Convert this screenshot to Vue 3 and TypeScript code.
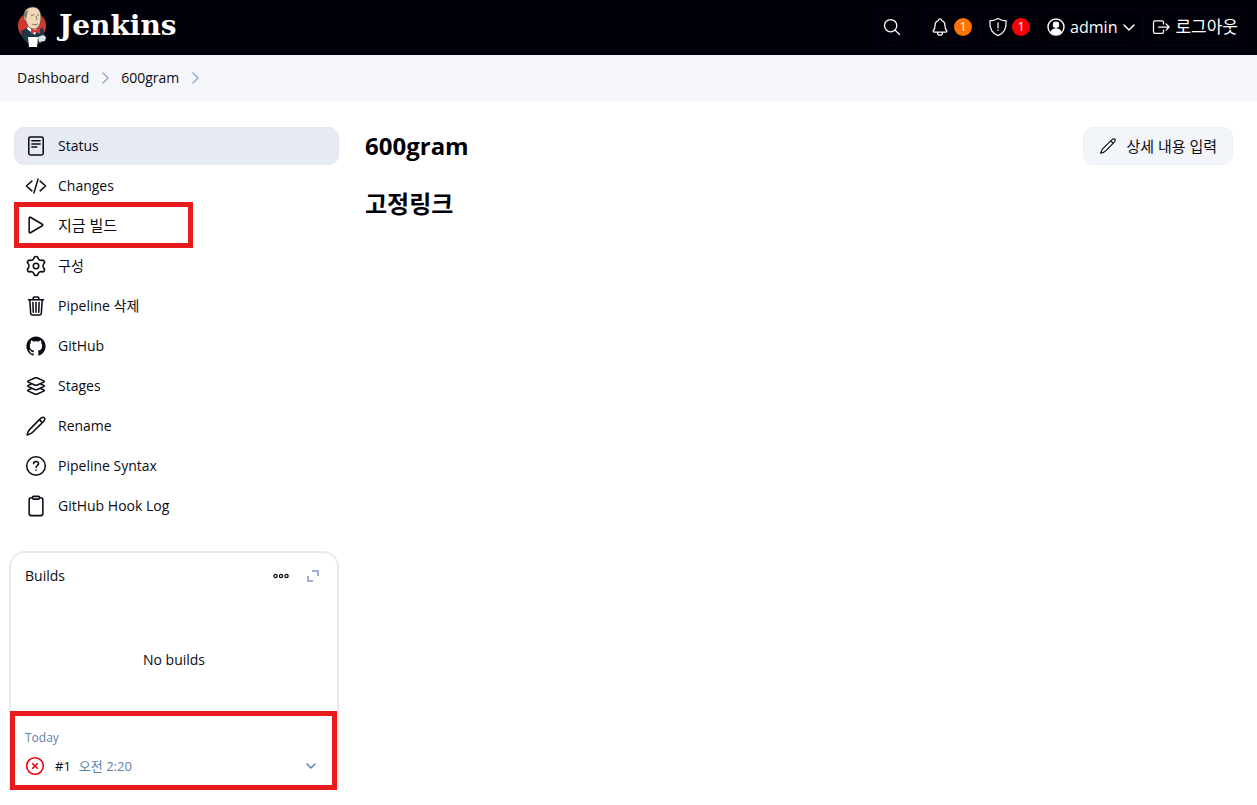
<script setup lang="ts">
interface Task {
  label: string
  icon: string
  active?: boolean
  marked?: boolean
  hangul?: boolean
}

const tasks: Task[] = [
  { label: 'Status', icon: 'status', active: true },
  { label: 'Changes', icon: 'code' },
  { label: '지금 빌드', icon: 'play', marked: true, hangul: true },
  { label: '구성', icon: 'gear' },
  { label: 'Pipeline 삭제', icon: 'trash' },
  { label: 'GitHub', icon: 'github' },
  { label: 'Stages', icon: 'layers' },
  { label: 'Rename', icon: 'pencil' },
  { label: 'Pipeline Syntax', icon: 'help' },
  { label: 'GitHub Hook Log', icon: 'clipboard' },
]

const crumbs: string[] = ['Dashboard', '600gram']

// Outlines on a 512-unit grid.
const paths: Record<string, string> = {
  status:
    'M128 48h256a40 40 0 0140 40v336a40 40 0 01-40 40H128a40 40 0 01-40-40V88a40 40 0 0140-40zM160 136h192M160 208h192M160 280h112',
  code: 'M160 368L32 256l128-112M352 368l128-112-128-112M304 96l-96 320',
  play: 'M96 96v320c0 17.44 17 28.52 31 20.16l276-163.37c12.12-7.25 12.12-26.33 0-33.58L127 75.84c-14-8.36-31 2.72-31 20.16z',
  gear:
    'M206 84C212 18 300 18 306 84Q331 126 380 127C440 99 484 175 430 213Q406 256 430 299C484 337 440 413 380 385Q331 386 306 428C300 494 212 494 206 428Q181 386 132 385C72 413 28 337 82 299Q106 256 82 213C28 175 72 99 132 127Q181 126 206 84zM256 192a64 64 0 100 128 64 64 0 000-128z',
  trash:
    'M112 112l20 320c.95 18.49 14.4 32 32 32h184c17.67 0 30.87-13.51 32-32l20-320M80 112h352M192 112V72a23.93 23.93 0 0124-24h80a23.93 23.93 0 0124 24v40M256 176v224M184 176l8 224M328 176l-8 224',
  layers:
    'M434.8 137.65l-149.36-68.1c-16.19-7.4-42.69-7.4-58.88 0L77.3 137.65c-17.6 8-17.6 21.09 0 29.09l148 67.5c16.89 7.7 44.69 7.7 61.58 0l148-67.5c17.52-8 17.52-21.1-.08-29.09zM160 308.52l-82.7 37.11c-17.6 8-17.6 21.1 0 29.1l148 67.5c16.89 7.69 44.69 7.69 61.58 0l148-67.5c17.6-8 17.6-21.1 0-29.1l-79.94-38.47M160 204.48l-82.8 37.16c-17.6 8-17.6 21.1 0 29.1l148 67.49c16.89 7.7 44.69 7.7 61.58 0l148-67.49c17.7-8 17.7-21.1.1-29.1L352 204.48',
  pencil:
    'M48 464C58 414 76 368 104 340L346 96C384 58 424 38 452 64S454 128 416 166L172 408C144 436 98 454 48 464zM334 108l70 70',
  help:
    'M256 40a216 216 0 100 432 216 216 0 000-432zM200 202c0-70 116-68 116-4 0 44-56 44-58 90M257 348v8',
  clipboard:
    'M336 64h32a48 48 0 0148 48v320a48 48 0 01-48 48H144a48 48 0 01-48-48V112a48 48 0 0148-48h32M202 32h108a26 26 0 010 64H202a26 26 0 010-64z',
}

const github =
  'M256 32C132.3 32 32 134.9 32 261.7c0 101.5 64.2 187.5 153.2 217.9a17.56 17.56 0 003.8.4c8.3 0 11.5-6.1 11.5-11.4 0-5.5-.2-19.9-.3-39.1a102.4 102.4 0 01-22.6 2.7c-43.1 0-52.9-33.5-52.9-33.5-10.2-26.5-24.9-33.6-24.9-33.6-19.5-13.7-.1-14.1 1.4-14.1h.1c22.5 2 34.3 23.8 34.3 23.8 11.2 19.6 26.2 25.1 39.6 25.1a63 63 0 0025.6-6c2-14.8 7.8-24.9 14.2-30.7-49.7-5.8-102-25.5-102-113.5 0-25.1 8.7-45.6 23-61.6-2.3-5.8-10-29.2 2.2-60.8a18.64 18.64 0 015-.5c8.1 0 26.4 3.1 56.6 24.1a208.21 208.21 0 01112.2 0c30.2-21 48.5-24.1 56.6-24.1a18.64 18.64 0 015 .5c12.2 31.6 4.5 55 2.2 60.8 14.3 16.1 23 36.6 23 61.6 0 88.2-52.4 107.6-102.3 113.3 8 7.1 15.2 21.1 15.2 42.5 0 30.7-.3 55.5-.3 63 0 5.4 3.1 11.5 11.4 11.5a19.35 19.35 0 004-.4C415.9 449.2 480 363.1 480 261.7 480 134.9 379.7 32 256 32z'
</script>

<template>
  <div class="page">
    <header class="header">
      <a class="brand" href="#">
        <svg class="butler" viewBox="0 0 34 42" aria-hidden="true">
          <ellipse cx="16" cy="20" rx="14" ry="14" fill="#d33833" />
          <path d="M5 25l7-4 8 3 7-2 2 8-2 3-1 4-6 2-9-2-5-6z" fill="#1f3647" />
          <path d="M12 20l-1 3 8 6 2-6z" fill="#fff" />
          <path d="M8 9C8 4 12 1 17 1s8 4 8 10c0 7-2 12-7 12-4 0-7-3-8-8-2-1-3-3-2-6z" fill="#f0d6b7" stroke="#49372d" stroke-width=".7" />
          <path d="M8 8c0 3 1 4 2 6l1-5 1-5c-2 1-4 2-4 4z" fill="#81786b" />
          <path d="M15 9h3m3 0h2m-3 1l1 4m-5 4c2 1 4 1 6 0" fill="none" stroke="#6d5547" stroke-width=".8" />
          <path d="M15 22l4 2 5-2v6l-5-2-4 2z" fill="#d33833" />
          <path d="M12 31h10l-1 10h-8z" fill="#fff" />
          <path d="M22 31l5-2 3 2-1 4-6 1z" fill="#dce3e8" />
        </svg>
        <span class="brand-name">Jenkins</span>
      </a>
      <div class="header-actions">
        <button class="hbtn search" type="button" aria-label="Search">
          <svg class="hicon line" viewBox="0 0 512 512"><circle cx="221" cy="221" r="157" /><path d="M338 338l110 110" /></svg>
        </button>
        <button class="hbtn notice" type="button" aria-label="Notifications">
          <svg class="hicon line" viewBox="0 0 512 512"><path d="M427.68 351.43C402 320 383.87 304 383.87 217.35 383.87 138 343.35 109.73 310 96c-4.43-1.82-8.6-6-9.95-10.55C294.2 65.54 277.8 48 256 48s-38.21 17.55-44 37.47c-1.35 4.6-5.52 8.71-9.95 10.53-33.39 13.75-73.87 41.92-73.87 121.35C128.13 304 110 320 84.32 351.43 73.68 364.45 83 384 101.61 384h308.88c18.51 0 27.77-19.61 17.19-32.57zM320 384v16a64 64 0 01-128 0v-16" /></svg>
          <span class="badge orange">1</span>
        </button>
        <button class="hbtn notice" type="button" aria-label="Security warnings">
          <svg class="hicon line" viewBox="0 0 512 512"><path d="M463 100C450 100 358 100 256 40 154 100 62 100 49 100c-14 200 53 320 207 376 154-56 221-176 207-376zM256 150v130M256 335v8" /></svg>
          <span class="badge red">1</span>
        </button>
        <a class="hbtn user" href="#">
          <svg class="hicon" viewBox="0 0 20 20"><circle cx="10" cy="10" r="8" fill="none" stroke="currentColor" stroke-width="1.4" /><circle cx="10" cy="7.8" r="3.2" fill="currentColor" /><path d="M4.5 15c1-5 10-5 11 0-3 4-8 4-11 0z" fill="currentColor" /></svg>
          <span>admin</span>
          <svg class="chev line" viewBox="0 0 12 12"><path d="M1 4l5 5 5-5" /></svg>
        </a>
        <a class="hbtn logout" href="#">
          <svg class="hicon line" viewBox="0 0 512 512"><path d="M320 176v-40a40 40 0 00-40-40H104a40 40 0 00-40 40v240a40 40 0 0040 40h176a40 40 0 0040-40v-40M384 176l80 80-80 80M191 256h273" /></svg>
          <span class="logout-text">로그아웃</span>
        </a>
      </div>
    </header>

    <nav class="crumbs" aria-label="Breadcrumb">
      <template v-for="crumb in crumbs" :key="crumb">
        <a href="#">{{ crumb }}</a>
        <svg class="crumb-sep line" viewBox="0 0 12 12" aria-hidden="true"><path d="M4 1l5 5-5 5" /></svg>
      </template>
    </nav>

    <div class="body">
      <aside class="side">
        <nav class="tasks" aria-label="Tasks">
          <a
            v-for="task in tasks"
            :key="task.label"
            href="#"
            class="task"
            :class="{ active: task.active, marked: task.marked, hangul: task.hangul }"
          >
            <svg class="ticon" :class="{ line: task.icon !== 'github' }" viewBox="0 0 512 512" aria-hidden="true">
              <path v-if="task.icon === 'github'" :d="github" fill="currentColor" />
              <path v-else :d="paths[task.icon]" />
            </svg>
            <span>{{ task.label }}</span>
          </a>
        </nav>

        <section class="builds">
          <div class="builds-head">
            <h2>Builds</h2>
            <button type="button" class="mini" aria-label="More">
              <svg class="dots" viewBox="0 0 16 6"><circle cx="2.5" cy="3" r="1.6" /><circle cx="8" cy="3" r="1.6" /><circle cx="13.5" cy="3" r="1.6" /></svg>
            </button>
            <button type="button" class="mini" aria-label="Expand">
              <svg class="expand" viewBox="0 0 12 12"><path d="M5 1h6v5M1 6v5h5" /></svg>
            </button>
          </div>
          <p class="empty">No builds</p>
          <div class="today">
            <h3>Today</h3>
            <div class="build">
              <svg class="failed" viewBox="0 0 20 20" role="img" aria-label="Failed"><circle cx="10" cy="10" r="8.3" /><path d="M7.7 7.7l4.6 4.6m0-4.6l-4.6 4.6" /></svg>
              <a href="#" class="num">#1</a>
              <a href="#" class="time">오전 2:20</a>
              <button type="button" class="mini more" aria-label="Build menu">
                <svg class="chev line" viewBox="0 0 12 12"><path d="M2 4l4 4 4-4" /></svg>
              </button>
            </div>
          </div>
        </section>
      </aside>

      <main class="main">
        <div class="main-head">
          <h1>600gram</h1>
          <button type="button" class="describe">
            <svg class="line" viewBox="0 0 512 512" aria-hidden="true"><path :d="paths.pencil" /></svg>
            <span>상세 내용 입력</span>
          </button>
        </div>
        <h2>고정링크</h2>
      </main>
    </div>
  </div>
</template>

<style>
body {
  margin: 0;
  background: #fff;
}
</style>

<style scoped>
.page {
  font-family: "Open Sans", "Noto Sans CJK KR", sans-serif;
  font-size: 14px;
  line-height: 20px;
  color: #0c0c14;
}
.page * {
  box-sizing: border-box;
}
a {
  color: inherit;
  text-decoration: none;
}
button {
  font: inherit;
  color: inherit;
  border: 0;
  background: none;
  padding: 0;
  cursor: pointer;
}
h1, h2, h3, p {
  margin: 0;
}
svg {
  display: block;
  flex: none;
}
.line {
  fill: none;
  stroke: currentColor;
  stroke-width: 32;
  stroke-linecap: round;
  stroke-linejoin: round;
}
.header {
  display: flex;
  align-items: center;
  justify-content: space-between;
  height: 55px;
  padding: 0 11px 1px 16px;
  background: #000009;
  color: #fff;
}
.brand {
  display: flex;
  align-items: center;
  gap: 9px;
}
.butler {
  width: 34px;
  height: 42px;
}
.brand-name {
  padding-bottom: 3px;
  font-family: "DejaVu Serif", serif;
  font-weight: 700;
  font-size: 28px;
  line-height: 32px;
}
.header-actions {
  display: flex;
  align-items: center;
  font-size: 16px;
}
.hbtn {
  display: flex;
  align-items: center;
  height: 38px;
  border: 1px solid #06060f;
  border-radius: 10px;
}
.hicon {
  width: 20px;
  height: 20px;
}
.search {
  padding: 0 7px;
  margin-right: 12px;
}
.notice {
  gap: 4px;
  padding: 0 7px;
}
.badge {
  width: 18px;
  height: 18px;
  border-radius: 50%;
  font-size: 12px;
  line-height: 18px;
  text-align: center;
}
.orange {
  background: #ff7300;
}
.red {
  background: #f90006;
}
.user {
  gap: 4px;
  padding: 0 7px;
}
.chev {
  width: 12px;
  height: 12px;
}
.user .chev {
  margin-left: 2px;
}
.logout {
  gap: 4px;
  padding: 0 7px;
}
.logout-text {
  font-size: 17px;
}
.crumbs {
  display: flex;
  align-items: center;
  gap: 10px;
  height: 46px;
  padding: 0 17px;
  background: #f5f6f9;
}
.crumb-sep {
  width: 12px;
  height: 12px;
  color: #98acd0;
}
.body {
  display: grid;
  grid-template-columns: 339px 1fr;
  column-gap: 26px;
  padding: 26px 24px 15px 0;
}
.tasks {
  display: flex;
  flex-direction: column;
  gap: 2px;
  padding-left: 14px;
}
.task {
  display: flex;
  align-items: center;
  gap: 11px;
  height: 38px;
  padding: 0 11px;
  border-radius: 10px;
}
.task.active {
  background: #e6eaf3;
  border: 1px solid #e3e8f1;
  padding: 0 10px;
}
.task.marked {
  width: 179px;
  height: 46px;
  margin: -5px 0 -3px;
  padding: 0 6px;
  border: 5px solid #e81c1c;
  border-radius: 0;
}
.task.hangul {
  font-size: 15px;
}
.ticon {
  width: 22px;
  height: 22px;
}
.ticon.line {
  stroke-width: 36;
}
.builds {
  margin: 26px 0 0 9px;
  border: 2px solid #e6ebf2;
  border-bottom: 0;
  border-radius: 16px 16px 0 0;
}
.builds-head {
  display: flex;
  align-items: center;
  padding: 13px 18px 0 14px;
}
.builds-head h2 {
  flex: 1;
  font-size: 14px;
  font-weight: 400;
}
.mini {
  display: flex;
  align-items: center;
  justify-content: center;
  height: 20px;
}
.dots {
  width: 16px;
  height: 6px;
  fill: none;
  stroke: currentColor;
  stroke-width: 1.3;
}
.expand {
  width: 12px;
  height: 12px;
  margin-left: 18px;
  fill: none;
  stroke: #7f98c4;
  stroke-width: 1.5;
}
.empty {
  padding: 64px 0 41px;
  text-align: center;
}
.today {
  margin: 0 0 0 -1px;
  height: 79px;
  padding: 12px 15px 0 10px;
  border: 5px solid #e81c1c;
  color: #5f7fab;
}
.today h3 {
  font-size: 12px;
  font-weight: 400;
  line-height: 20px;
}
.build {
  display: flex;
  align-items: center;
  margin-top: 8px;
  font-size: 13px;
}
.failed {
  width: 20px;
  height: 20px;
  fill: none;
  stroke: #f00010;
  stroke-width: 1.6;
  stroke-linecap: round;
}
.num {
  margin: 0 8px 0 10px;
  color: #0c0c14;
}
.more {
  margin-left: auto;
}
.main-head {
  display: flex;
  align-items: center;
  justify-content: space-between;
  height: 38px;
}
h1 {
  font-size: 24px;
  line-height: 32px;
}
.main h1,
.main h2 {
  color: #000006;
}
.main h2 {
  margin-top: 23px;
  font-size: 24px;
  line-height: 32px;
}
.describe {
  display: flex;
  align-items: center;
  gap: 9px;
  height: 38px;
  padding: 0 15px;
  border: 1px solid #ecf1f5;
  border-radius: 10px;
  background: #f2f5f9;
  font-size: 15px;
}
.describe svg {
  width: 18px;
  height: 18px;
}
.user .chev,
.crumb-sep.line,
.more .chev {
  stroke-width: 1.5;
}
</style>
